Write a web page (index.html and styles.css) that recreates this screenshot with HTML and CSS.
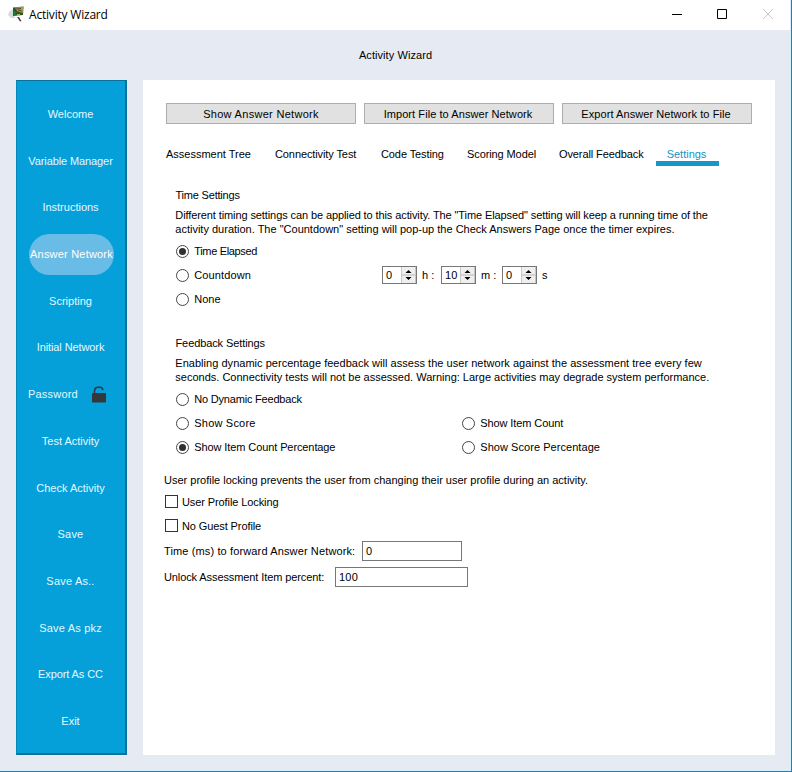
FILE: index.html
```html
<!DOCTYPE html>
<html lang="en">
<head>
<meta charset="utf-8">
<title>Activity Wizard</title>
<link rel="stylesheet" href="styles.css">
</head>
<body>
<div class="window">
  <header class="titlebar">
    <svg class="app-icon" width="18" height="18" viewBox="0 0 18 18">
      <path d="M5 4 1.500 6.500 0 10l3 3 4 0z" fill="#d6dadd"/>
      <path d="M5 2.500 15.500 1.500 15 10 5 11z" fill="#2d5724"/>
      <path d="M7 2.500 15.500 2 14.500 8 9 6z" fill="#b8975b"/>
      <path d="m8 4 5-.5M10 5l4 1" stroke="#504b28" stroke-width="1"/>
      <path d="m5 5 3 3-2 3z" fill="#198344"/>
      <path d="m9 12 2 0 2.500 4-1.500 .5z" fill="#424449"/>
      <path d="M9 10h3" stroke="#d9c45d" stroke-width="1.500"/>
    </svg>
    <span class="window-title">Activity Wizard</span>
    <svg class="controls" width="106" height="18" viewBox="0 0 106 18" fill="none">
      <path d="M0 9.500h10" stroke="#000"/>
      <path d="M45.500 4.500h9v9h-9z" stroke="#000"/>
      <path d="m91 4 10 10m0-10L91 14" stroke="#c9c9c9"/>
    </svg>
  </header>
  <h1 class="heading">Activity Wizard</h1>
  <main class="content">
    <nav class="sidebar">
      <a>Welcome</a>
      <a class="tight">Variable Manager</a>
      <a>Instructions</a>
      <a class="active"><span class="pill loosest">Answer Network</span></a>
      <a>Scripting</a>
      <a class="tight">Initial Network</a>
      <a class="password loosest"><span>Password</span>
        <svg width="14" height="17" viewBox="0 0 14 17"><path d="M2.500 8V4.500Q3 1.500 6 1.300h2Q10.500 1.500 11 4" fill="none" stroke="#34383b" stroke-width="1.500"/><rect y="7" width="14" height="9.500" rx="1" fill="#34383b"/></svg>
      </a>
      <a>Test Activity</a>
      <a>Check Activity</a>
      <a class="loosest">Save</a>
      <a class="loosest">Save As..</a>
      <a class="loosest">Save As pkz</a>
      <a class="tight">Export As CC</a>
      <a>Exit</a>
    </nav>
    <section class="panel">
      <div class="actions">
        <button class="show">Show Answer Network</button>
        <button class="import">Import File to Answer Network</button>
        <button class="export">Export Answer Network to File</button>
      </div>
      <div class="tabs">
        <span>Assessment Tree</span><span class="tight">Connectivity Test</span><span class="tight">Code Testing</span><span class="tight">Scoring Model</span><span class="tight">Overall Feedback</span><span class="selected">Settings</span>
      </div>
      <div class="group time">
        <h2 class="tighter">Time Settings</h2>
        <p><span class="tight">Different timing settings can be applied to this activity. The "Time Elapsed" setting will keep a running time of the</span><br><span>activity duration. The "Countdown" setting will pop-up the Check Answers Page once the timer expires.</span></p>
        <div class="row"><label class="tightest"><i class="radio on"></i>Time Elapsed</label></div>
        <div class="row"><label class="count looser"><i class="radio"></i>Countdown</label>
          <span class="spin"><b>0</b><i class="arrows"><svg viewBox="0 0 13 16"><path class="divider" d="M0 8h13"/><path d="M3.500 6h6L6.500 3zM3.500 10h6l-3 3z"/></svg></i></span><span class="unit">h :</span>
          <span class="spin"><b>10</b><i class="arrows"><svg viewBox="0 0 13 16"><path class="divider" d="M0 8h13"/><path d="M3.500 6h6L6.500 3zM3.500 10h6l-3 3z"/></svg></i></span><span class="unit minutes">m :</span>
          <span class="spin"><b>0</b><i class="arrows"><svg viewBox="0 0 13 16"><path class="divider" d="M0 8h13"/><path d="M3.500 6h6L6.500 3zM3.500 10h6l-3 3z"/></svg></i></span><span class="unit">s</span>
        </div>
        <div class="row"><label><i class="radio"></i>None</label></div>
      </div>
      <div class="group feedback">
        <h2 class="tight">Feedback Settings</h2>
        <p><span class="enabling">Enabling dynamic percentage feedback will assess the user network against the assessment tree every few</span><br><span>seconds. Connectivity tests will not be assessed. Warning: Large activities may degrade system performance.</span></p>
        <div class="row"><label class="tighter"><i class="radio"></i>No Dynamic Feedback</label></div>
        <div class="row pair"><label class="loosest"><i class="radio"></i>Show Score</label><label class="tight"><i class="radio"></i>Show Item Count</label></div>
        <div class="row pair"><label class="tight"><i class="radio on"></i>Show Item Count Percentage</label><label class="loose"><i class="radio"></i>Show Score Percentage</label></div>
      </div>
      <div class="profile">
        <p class="note">User profile locking prevents the user from changing their user profile during an activity.</p>
        <div class="row"><label class="tight"><i class="check"></i>User Profile Locking</label></div>
        <div class="row"><label class="tight"><i class="check"></i>No Guest Profile</label></div>
        <div class="field"><span class="forward looser">Time (ms) to forward Answer Network:</span><span class="input">0</span></div>
        <div class="field"><span class="unlock tight">Unlock Assessment Item percent:</span><span class="input wide">100</span></div>
      </div>
    </section>
  </main>
</div>
</body>
</html>
```
FILE: styles.css
```css
* { box-sizing: border-box; }
body { margin: 0; background: #e6eaf3; color: #000; font: 11px/14px "Liberation Sans", Arial, sans-serif; overflow: hidden; }
h1, h2, p { margin: 0; font: inherit; }
.tightest { letter-spacing: -.35px; }
.tighter { letter-spacing: -.2px; }
.tight { letter-spacing: -.1px; }
.loose { letter-spacing: .05px; }
.looser { letter-spacing: .13px; }
.loosest { letter-spacing: .2px; }
.show { letter-spacing: .3px; }
.import, .export { letter-spacing: .07px; padding: 0 2px 0 0; }
.enabling { letter-spacing: .03px; }
.window { width: 792px; height: 772px; border-right: 1px solid #247fae; border-bottom: 1px solid #247fae; box-shadow: inset -1px -1px #d3effb; }
.titlebar { height: 30px; background: #fff; display: flex; align-items: center; padding: 0 18px 2px 8px; margin-right: 1px; }
.app-icon { margin-right: 3px; }
.window-title { font: 12px/16px "Open Sans", "Noto Sans", sans-serif; letter-spacing: -.2px; margin-top: 2px; }
.controls { margin-left: auto; margin-right: -6px; }
.heading { height: 50px; line-height: 50px; text-align: center; letter-spacing: .07px; }
.content { display: flex; gap: 16px; padding-left: 16px; }
.sidebar { width: 111px; height: 675px; padding: 9.5px 0 8.5px; display: flex; flex-direction: column; background: #059fda; border: 1px solid #087298; border-left-color: #0788b9; border-right: 2px solid #087298; border-bottom-width: 2px; color: #e2faff; }
.sidebar a { flex: 1; display: flex; align-items: center; justify-content: center; white-space: nowrap; padding-right: 1px; }
.pill { height: 41px; width: 85px; display: flex; align-items: center; justify-content: center; border-radius: 21px; background: #69bce5; color: #fff; margin-left: 2px; }
.sidebar .password { justify-content: flex-start; padding-left: 11px; gap: 14px; }
.panel { width: 632px; height: 675px; background: #fff; padding: 23px 22px 0 21px; }
.actions { display: flex; gap: 8px; padding-left: 2px; }
button { width: 190px; height: 21px; padding: 0; border: 1px solid #adadad; background: #e1e1e1; color: #000; font-family: inherit; font-size: 11px; }
.tabs { display: grid; grid-template-columns: 109px 106px 86px 92px 97px 63px; height: 19px; margin: 23px 0 0 2px; white-space: nowrap; }
.tabs .selected { color: #1695c5; border-bottom: 5px solid #1498c9; text-align: center; height: 19px; padding-right: 2px; }
.group { padding-left: 12px; }
.time { margin-top: 22px; }
.feedback { margin-top: 25px; }
h2 { height: 20px; line-height: 14px; margin-left: -.5px; }
.group p { height: 31px; white-space: nowrap; margin-left: -.7px; }
.row { height: 24px; display: flex; align-items: center; }
label { display: flex; align-items: center; white-space: nowrap; }
.radio { width: 13px; height: 13px; border: 1px solid #444; border-radius: 50%; margin-right: 5.3px; display: flex; }
.radio.on::after { content: ""; width: 7px; height: 7px; margin: auto; border-radius: 50%; background: #303030; }
.count { width: 206px; }
.spin { width: 35px; height: 18px; border: 1px solid #777; display: flex; justify-content: space-between; padding-left: 3px; background: #fff; letter-spacing: .2px; }
.spin b { font-weight: 400; line-height: 16px; }
.arrows { width: 15px; height: 16px; border: 1px solid #c7c7c7; border-width: 0 1px; background: #efefef; display: flex; }
.arrows svg { width: 13px; height: 16px; }
.divider { stroke: #b6b6b6; }
.unit { width: 24px; padding-left: 5px; white-space: nowrap; }
.unit.minutes { width: 26px; }
.pair label { width: 286px; }
.profile { margin-top: 14px; }
.note { height: 17px; white-space: nowrap; }
.check { width: 13px; height: 13px; border: 1px solid #333; margin: 0 4px 2px 1px; }
.field { height: 26px; display: flex; align-items: center; white-space: nowrap; }
.forward { width: 198px; }
.unlock { width: 171px; }
.input { width: 100px; height: 20px; border: 1px solid #777; padding-left: 3px; line-height: 18px; letter-spacing: .2px; }
.input.wide { width: 133px; }
```
